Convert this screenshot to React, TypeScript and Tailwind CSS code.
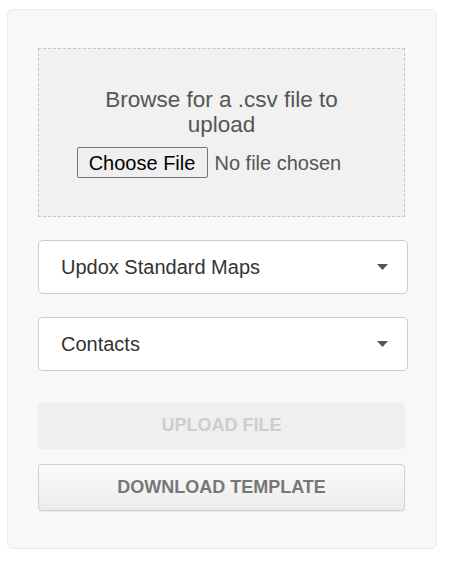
const Caret = () => (
  <svg width="11" height="6" viewBox="0 0 11 6" className="shrink-0">
    <path d="M0 0 L11 0 L5.5 6 Z" fill="#555" />
  </svg>
)

const SelectBox = ({ label, className = '' }: { label: string; className?: string }) => (
  <div
    className={`flex h-[54px] w-[370px] items-center justify-between rounded-[5px] border border-[#cccccc] bg-white pl-[22px] pr-[19px] ${className}`}
  >
    <span className="text-[20px] leading-none text-[#333]">{label}</span>
    <Caret />
  </div>
)

export default function App() {
  return (
    <div
      className="h-[582px] w-[450px] bg-white pl-[7px] pt-[9px]"
      style={{ fontFamily: '"Liberation Sans", Arial, sans-serif' }}
    >
      <div className="flex h-[540px] w-[430px] flex-col rounded-[6px] border border-[#ebebeb] bg-[#f8f8f8] pl-[30px] pt-[38px]">
        {/* DROPZONE */}
        <div className="flex h-[169px] w-[367px] flex-col items-center justify-center border border-dashed border-[#c6c6c6] bg-[#f1f1f1]">
          <p className="w-[260px] text-center text-[22.5px] leading-[25px] text-[#555]">
            Browse for a .csv file to upload
          </p>
          <div className="mt-[10px] flex w-[290px] items-center gap-[7px]">
            <button className="h-[31px] w-[131px] rounded-[2px] border border-[#767676] bg-[#efefef] text-[20px] leading-none text-black">
              Choose File
            </button>
            <span className="text-[20px] leading-none text-[#555]">No file chosen</span>
          </div>
        </div>

        {/* SELECTS */}
        <SelectBox label="Updox Standard Maps" className="mt-[23px]" />
        <SelectBox label="Contacts" className="mt-[23px]" />

        {/* BUTTONS */}
        <button
          disabled
          className="mt-[31px] h-[47px] w-[367px] rounded-[4px] bg-[#efefef] text-[18px] font-bold uppercase text-[#cdcdcd]"
        >
          Upload File
        </button>
        <button className="mt-[15px] h-[47px] w-[367px] rounded-[4px] border border-[#d0d0d0] bg-linear-to-b from-[#fafafa] to-[#ececec] text-[18px] font-bold uppercase text-[#777] shadow-[0_1px_1px_rgba(0,0,0,0.05)]">
          Download Template
        </button>
      </div>
    </div>
  )
}
